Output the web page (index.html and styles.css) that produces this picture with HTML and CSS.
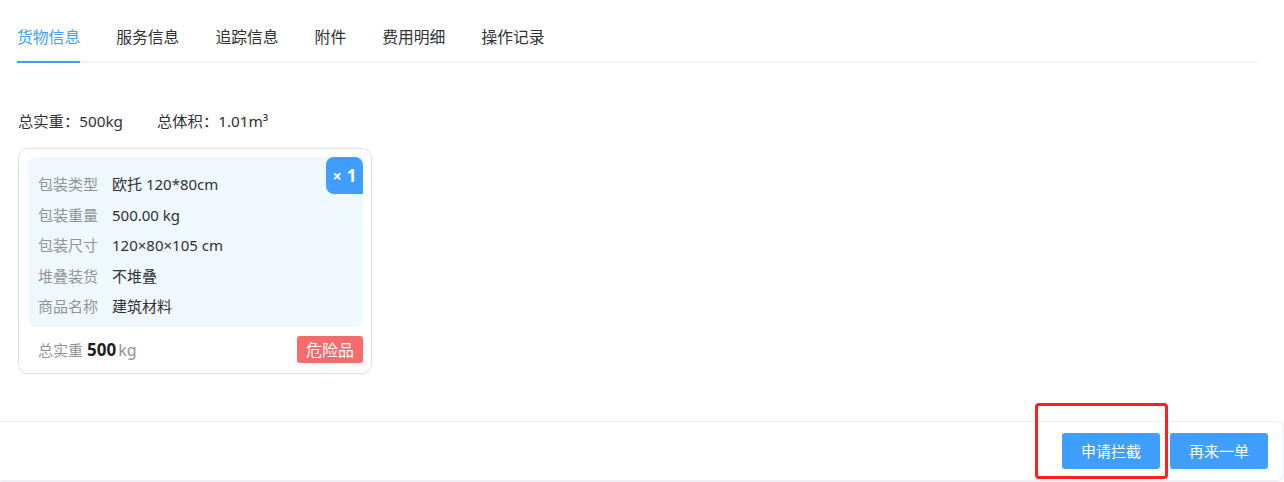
FILE: index.html
```html
<!DOCTYPE html>
<html lang="zh-CN">
<head>
<meta charset="utf-8">
<title>货物信息</title>
<link rel="stylesheet" href="styles.css">
</head>
<body>
<div class="page">
  <nav class="tabs">
    <span class="tab active">货物信息</span>
    <span class="tab">服务信息</span>
    <span class="tab">追踪信息</span>
    <span class="tab">附件</span>
    <span class="tab">费用明细</span>
    <span class="tab">操作记录</span>
  </nav>

  <div class="summary">
    <span class="sum-item">总实重：500kg</span>
    <span class="sum-item">总体积：1.01m³</span>
  </div>

  <div class="card">
    <div class="info">
      <span class="qty"><span class="x">×</span>1</span>
      <div class="row"><span class="label">包装类型</span><span class="value">欧托 120*80cm</span></div>
      <div class="row"><span class="label">包装重量</span><span class="value">500.00 kg</span></div>
      <div class="row"><span class="label">包装尺寸</span><span class="value">120×80×105 cm</span></div>
      <div class="row"><span class="label">堆叠装货</span><span class="value">不堆叠</span></div>
      <div class="row"><span class="label">商品名称</span><span class="value">建筑材料</span></div>
    </div>
    <div class="card-foot">
      <div class="weight">
        <span class="w-label">总实重</span>
        <span class="w-num">500</span>
        <span class="w-unit">kg</span>
      </div>
      <span class="danger">危险品</span>
    </div>
  </div>
</div>

<footer class="bar">
  <span class="btn-wrap">
    <button class="btn">申请拦截</button>
    <span class="highlight"></span>
  </span>
  <button class="btn">再来一单</button>
</footer>
</body>
</html>
```

FILE: styles.css
```css
* { box-sizing: border-box; }

html, body {
  margin: 0;
  padding: 0;
  background: #ffffff;
}

body {
  font-family: "Noto Sans", "Noto Sans CJK SC", sans-serif;
  color: #303133;
  width: 1284px;
  height: 482px;
  overflow: hidden;
}

.page {
  padding: 0 26px 0 16px;
}

.tabs {
  display: flex;
  gap: 36px;
  padding-top: 17px;
  padding-left: 1px;
  border-bottom: 2px solid #f2f3f5;
}

.tab {
  font-size: 15.8px;
  line-height: 40px;
  padding-bottom: 4px;
  margin-bottom: -2px;
  border-bottom: 2px solid transparent;
  color: #303133;
  white-space: nowrap;
}

.tab.active {
  color: #409eff;
  border-bottom-color: #409eff;
}

.summary {
  margin-top: 47px;
  padding-left: 2px;
  display: flex;
  gap: 34px;
  font-size: 15.3px;
  line-height: 22px;
  color: #303133;
}

.card {
  margin-top: 16px;
  margin-left: 2px;
  width: 354px;
  border: 1px solid #dcdfe6;
  border-radius: 10px;
  padding: 8px 8px 0 9px;
}

.info {
  position: relative;
  background: #f0f8ff;
  border-radius: 8px;
  padding: 12px 10px 5px;
}

.qty {
  position: absolute;
  top: 0;
  right: 0;
  width: 37px;
  height: 37px;
  background: #409eff;
  color: #ffffff;
  border-radius: 8px 8px 0 8px;
  font-size: 17px;
  font-weight: 700;
  display: flex;
  align-items: center;
  justify-content: center;
  gap: 5px;
}

.qty .x {
  font-size: 16px;
}

.row {
  display: flex;
  font-size: 15px;
  line-height: 30.5px;
}

.label {
  width: 74px;
  flex: none;
  color: #909399;
}

.value {
  color: #303133;
}

.card-foot {
  height: 46px;
  display: flex;
  align-items: center;
  justify-content: space-between;
  padding-left: 10px;
}

.weight {
  display: flex;
  align-items: baseline;
  gap: 4px;
}

.w-label {
  font-size: 15px;
  color: #909399;
}

.w-num {
  font-size: 17px;
  font-weight: 700;
  color: #1f1f1f;
}

.w-unit {
  font-size: 16px;
  color: #909399;
  margin-left: -2px;
}

.danger {
  background: #f56c6c;
  color: #ffffff;
  font-size: 16px;
  line-height: 27px;
  padding: 0 9px;
  border-radius: 3px;
  font-family: "Noto Sans CJK SC", sans-serif;
}

.bar {
  margin-top: 47px;
  height: 60px;
  border: 1px solid #ebeef5;
  border-left: none;
  border-radius: 0 8px 8px 0;
  box-shadow: 0 1px 2px rgba(0, 0, 0, 0.08);
  display: flex;
  justify-content: flex-end;
  align-items: center;
  gap: 10px;
  padding-right: 15px;
}

.btn-wrap {
  position: relative;
  display: flex;
}

.btn {
  width: 98px;
  height: 36px;
  border: none;
  border-radius: 3px;
  background: #409eff;
  color: #ffffff;
  font-family: "Noto Sans CJK SC", sans-serif;
  font-size: 15px;
  padding: 0;
}

.highlight {
  position: absolute;
  left: -27px;
  right: -8px;
  top: -30px;
  bottom: -10px;
  border: 3px solid #ff1f1f;
  border-radius: 4px;
  pointer-events: none;
}
```
